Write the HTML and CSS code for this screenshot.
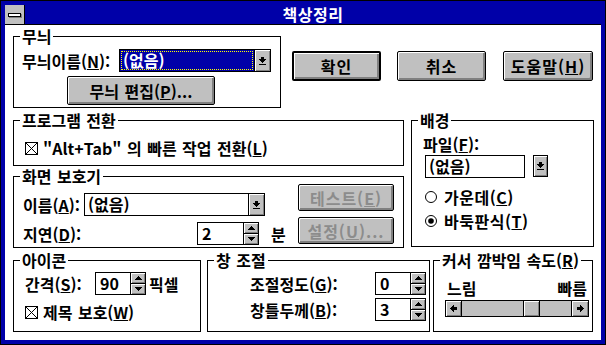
FILE: index.html
```html
<!DOCTYPE html>
<html lang="ko">
<head>
<meta charset="utf-8">
<title>책상정리</title>
<link rel="stylesheet" href="styles.css">
</head>
<body>
<div class="window">
  <div class="titlebar">
    <div class="sysmenu"><span class="sysbar"></span></div>
    <div class="title">책상정리</div>
  </div>
  <div class="client">
    <div class="row row-top">
      <div class="group g-pattern">
        <span class="legend">무늬</span>
        <div class="line">
          <span class="lbl lbl-pattern">무늬이름(<u>N</u>):</span>
          <div class="combo combo-pattern">
            <div class="combo-value selected">(없음)</div>
            <div class="drop"><svg width="7" height="8" shape-rendering="crispEdges"><rect x="2" y="0" width="3" height="2"/><path d="M0 2h7v1h-1v1h-1v1h-1v1h-1v-1h-1v-1h-1v-1h-1z"/><rect x="0" y="7" width="7" height="1"/></svg></div>
          </div>
        </div>
        <div class="btn btn-edit">무늬 편집(<u>P</u>)...</div>
      </div>
      <div class="actions">
        <div class="btn btn-action btn-default">확인</div>
        <div class="btn btn-action">취소</div>
        <div class="btn btn-action btn-help">도움말(<u>H</u>)</div>
      </div>
    </div>

    <div class="row row-mid">
      <div class="col-left">
        <div class="group g-switch">
          <span class="legend">프로그램 전환</span>
          <div class="check-line">
            <svg class="checkbox" width="13" height="13"><rect x="0.5" y="0.5" width="12" height="12" fill="#fff" stroke="#000"/><path d="M1 1L12 12M12 1L1 12" stroke="#000"/></svg>
            <span>"Alt+Tab" 의 빠른 작업 전환(<u>L</u>)</span>
          </div>
        </div>
        <div class="group g-saver">
          <span class="legend">화면 보호기</span>
          <div class="saver-fields">
            <div class="line">
              <span class="lbl lbl-name">이름(<u>A</u>):</span>
              <div class="combo combo-saver">
                <div class="combo-value">(없음)</div>
                <div class="drop"><svg width="7" height="8" shape-rendering="crispEdges"><rect x="2" y="0" width="3" height="2"/><path d="M0 2h7v1h-1v1h-1v1h-1v1h-1v-1h-1v-1h-1v-1h-1z"/><rect x="0" y="7" width="7" height="1"/></svg></div>
              </div>
            </div>
            <div class="line line-delay">
              <span class="lbl lbl-delay">지연(<u>D</u>):</span>
              <div class="spin spin-delay">
                <div class="spin-value">2</div>
                <div class="spin-btns">
                  <div class="half"><svg width="7" height="4" shape-rendering="crispEdges"><path d="M3 0h1v1h1v1h1v1h1v1h-7v-1h1v-1h1v-1h1z"/></svg></div>
                  <div class="half"><svg width="7" height="4" shape-rendering="crispEdges"><path d="M0 0h7v1h-1v1h-1v1h-1v1h-1v-1h-1v-1h-1v-1h-1z"/></svg></div>
                </div>
              </div>
              <span class="unit-min">분</span>
            </div>
          </div>
          <div class="saver-buttons">
            <div class="btn btn-saver disabled">테스트(<u>E</u>)</div>
            <div class="btn btn-saver disabled">설정(<u>U</u>)...</div>
          </div>
        </div>
      </div>

      <div class="group g-bg">
        <span class="legend">배경</span>
        <div class="file-label">파일(<u>F</u>):</div>
        <div class="file-line">
          <div class="edit-file">(없음)</div>
          <div class="drop drop-file"><svg width="7" height="8" shape-rendering="crispEdges"><rect x="2" y="0" width="3" height="2"/><path d="M0 2h7v1h-1v1h-1v1h-1v1h-1v-1h-1v-1h-1v-1h-1z"/><rect x="0" y="7" width="7" height="1"/></svg></div>
        </div>
        <div class="radios">
          <div class="radio-line">
            <svg width="12" height="12"><circle cx="6" cy="6" r="5.5" fill="#fff" stroke="#000"/></svg>
            <span>가운데(<u>C</u>)</span>
          </div>
          <div class="radio-line">
            <svg width="12" height="12"><circle cx="6" cy="6" r="5.5" fill="#fff" stroke="#000"/><circle cx="6" cy="6" r="2.8" fill="#000"/></svg>
            <span>바둑판식(<u>T</u>)</span>
          </div>
        </div>
      </div>
    </div>

    <div class="row row-bottom">
      <div class="group g-icon">
        <span class="legend">아이콘</span>
        <div class="line">
          <span class="lbl lbl-gap">간격(<u>S</u>):</span>
          <div class="spin spin-small">
            <div class="spin-value">90</div>
            <div class="spin-btns">
              <div class="half"><svg width="7" height="4" shape-rendering="crispEdges"><path d="M3 0h1v1h1v1h1v1h1v1h-7v-1h1v-1h1v-1h1z"/></svg></div>
              <div class="half"><svg width="7" height="4" shape-rendering="crispEdges"><path d="M0 0h7v1h-1v1h-1v1h-1v1h-1v-1h-1v-1h-1v-1h-1z"/></svg></div>
            </div>
          </div>
          <span class="unit-px">픽셀</span>
        </div>
        <div class="check-line check-title">
          <svg class="checkbox" width="13" height="13"><rect x="0.5" y="0.5" width="12" height="12" fill="#fff" stroke="#000"/><path d="M1 1L12 12M12 1L1 12" stroke="#000"/></svg>
          <span>제목 보호(<u>W</u>)</span>
        </div>
      </div>

      <div class="group g-arrange">
        <span class="legend">창 조절</span>
        <div class="line arr-line">
          <span class="lbl lbl-arr">조절정도(<u>G</u>):</span>
          <div class="spin spin-small">
            <div class="spin-value">0</div>
            <div class="spin-btns">
              <div class="half"><svg width="7" height="4" shape-rendering="crispEdges"><path d="M3 0h1v1h1v1h1v1h1v1h-7v-1h1v-1h1v-1h1z"/></svg></div>
              <div class="half"><svg width="7" height="4" shape-rendering="crispEdges"><path d="M0 0h7v1h-1v1h-1v1h-1v1h-1v-1h-1v-1h-1v-1h-1z"/></svg></div>
            </div>
          </div>
        </div>
        <div class="line arr-line">
          <span class="lbl lbl-arr">창틀두께(<u>B</u>):</span>
          <div class="spin spin-small">
            <div class="spin-value">3</div>
            <div class="spin-btns">
              <div class="half"><svg width="7" height="4" shape-rendering="crispEdges"><path d="M3 0h1v1h1v1h1v1h1v1h-7v-1h1v-1h1v-1h1z"/></svg></div>
              <div class="half"><svg width="7" height="4" shape-rendering="crispEdges"><path d="M0 0h7v1h-1v1h-1v1h-1v1h-1v-1h-1v-1h-1v-1h-1z"/></svg></div>
            </div>
          </div>
        </div>
      </div>

      <div class="group g-cursor">
        <span class="legend">커서 깜박임 속도(<u>R</u>)</span>
        <div class="speed-labels"><span>느림</span><span>빠름</span></div>
        <div class="scrollbar">
          <div class="sb-btn sb-left"><svg width="7" height="7" shape-rendering="crispEdges"><path d="M0 3h1v-1h1v-1h1v-1h1v7h-1v-1h-1v-1h-1v-1h-1z"/><rect x="4" y="2" width="3" height="3"/></svg></div>
          <div class="sb-track"><div class="sb-thumb"></div></div>
          <div class="sb-btn sb-right"><svg width="7" height="7" shape-rendering="crispEdges"><g transform="translate(7,0) scale(-1,1)"><path d="M0 3h1v-1h1v-1h1v-1h1v7h-1v-1h-1v-1h-1v-1h-1z"/><rect x="4" y="2" width="3" height="3"/></g></svg></div>
        </div>
      </div>
    </div>
  </div>
</div>
</body>
</html>
```

FILE: styles.css
```css
* { box-sizing: border-box; }
html, body { margin: 0; padding: 0; }
body {
  width: 606px;
  height: 345px;
  overflow: hidden;
  font-family: "Noto Sans CJK KR", "Liberation Sans", sans-serif;
  font-size: 16px;
  line-height: 18px;
  font-weight: bold;
  color: #000;
  word-spacing: 1px;
}
u { text-decoration: underline; text-underline-offset: 1px; }
svg { display: block; flex: none; }

.window {
  width: 606px;
  height: 345px;
  border: 1px solid #000;
  padding: 4px;
  background: #0000a8;
  display: flex;
  flex-direction: column;
}
.titlebar {
  flex: none;
  height: 20px;
  display: flex;
  border-bottom: 1px solid #000;
  background: #0000a8;
}
.sysmenu {
  flex: none;
  width: 20px;
  height: 19px;
  background: #c0c0c0;
  border-right: 1px solid #000;
  display: flex;
  align-items: center;
  justify-content: center;
}
.sysbar {
  width: 13px;
  height: 4px;
  border: 1px solid #000;
  background: #fff;
  box-shadow: 1px 1px 0 #808080;
}
.title {
  flex: 1;
  text-align: center;
  color: #fff;
  font-size: 16px;
  line-height: 19px;
  letter-spacing: 0.5px;
}
.client {
  flex: 1;
  background: #fff;
  padding-left: 8px;
}
.row { display: flex; align-items: flex-start; }
.row-top { margin-top: 11px; }
.row-mid { margin-top: 12px; }
.row-bottom { margin-top: 12px; }

.group {
  position: relative;
  flex: none;
  border: 1px solid #000;
}
.legend {
  position: absolute;
  left: 6px;
  top: -9px;
  padding: 0 2px;
  background: #fff;
  line-height: 16px;
  white-space: nowrap;
}
.line { display: flex; align-items: center; }
.lbl { flex: none; white-space: nowrap; }

/* combo boxes */
.combo {
  flex: none;
  display: flex;
  height: 23px;
  border: 1px solid #000;
  background: #fff;
}
.combo-value {
  flex: 1;
  line-height: 21px;
  padding-left: 3px;
  white-space: nowrap;
}
.combo-value.selected {
  background: #0000a8;
  color: #fff;
  outline: 1px dotted #ffff00;
  outline-offset: -2px;
}
.drop {
  flex: none;
  width: 16px;
  border-left: 1px solid #000;
  background: #c0c0c0;
  display: flex;
  align-items: center;
  justify-content: center;
  box-shadow: inset 1px 1px 0 #fff, inset -1px -1px 0 #808080;
}

/* buttons */
.btn {
  flex: none;
  display: flex;
  align-items: center;
  justify-content: center;
  background: #c0c0c0;
  border: 1px solid #000;
  border-radius: 2px;
  white-space: nowrap;
  box-shadow: inset 1px 1px 0 #fff, inset -2px -2px 0 #808080;
}
.btn-default { border-width: 2px; }
.btn-action { letter-spacing: 1px; }
.disabled { color: #8c8c8c; }

/* 무늬 */
.g-pattern { width: 268px; height: 72px; padding: 12px 0 0 8px; }
.lbl-pattern { width: 97px; }
.combo-pattern { width: 152px; }
.btn-edit { width: 148px; height: 29px; margin: 4px 0 0 45px; }

.actions { display: flex; gap: 16px; margin: 15px 0 0 11px; }
.btn-action { width: 89px; height: 30px; }
.btn-help { width: 90px; margin-left: 1px; }

/* left column */
.col-left { flex: none; width: 391px; display: flex; flex-direction: column; }
.g-switch { height: 46px; padding: 17px 0 0 11px; }
.check-line { display: flex; align-items: center; gap: 5px; height: 20px; white-space: nowrap; }

.g-saver { height: 72px; margin-top: 10px; display: flex; }
.saver-fields { flex: none; width: 275px; padding: 16px 0 0 9px; }
.lbl-name { width: 61px; }
.combo-saver { width: 181px; }
.line-delay { margin-top: 6px; }
.lbl-delay { width: 174px; }
.unit-min { margin-left: 12px; }
.saver-buttons { display: flex; flex-direction: column; gap: 6px; padding-top: 7px; margin-left: 9px; }
.btn-saver { width: 96px; height: 27px; letter-spacing: 1px; }

/* spin boxes */
.spin { flex: none; display: flex; height: 23px; }
.spin-value {
  border: 1px solid #000;
  background: #fff;
  padding-left: 4px;
  line-height: 21px;
}
.spin-delay .spin-value { width: 47px; }
.spin-small .spin-value { width: 36px; }
.spin-btns {
  width: 16px;
  margin-left: -1px;
  border: 1px solid #000;
  background: #c0c0c0;
  display: flex;
  flex-direction: column;
}
.half {
  flex: 1;
  display: flex;
  align-items: center;
  justify-content: center;
  box-shadow: inset 1px 1px 0 #fff, inset -1px -1px 0 #808080;
}
.half + .half { border-top: 1px solid #000; }

/* 배경 */
.g-bg { width: 183px; height: 127px; margin-left: 7px; padding: 14px 0 0 11px; }
.file-label { line-height: 18px; }
.file-line { display: flex; align-items: flex-start; gap: 8px; margin: 2px 0 0 2px; }
.edit-file {
  width: 100px;
  height: 23px;
  border: 1px solid #000;
  line-height: 21px;
  padding-left: 3px;
}
.drop-file { width: 15px; height: 22px; border: 1px solid #000; }
.radios { margin: 7px 0 0 2px; }
.radio-line { display: flex; align-items: center; gap: 7px; height: 24px; letter-spacing: 0.5px; }

/* 아이콘 */
.g-icon { width: 188px; height: 72px; padding: 11px 0 0 11px; }
.lbl-gap { width: 70px; }
.unit-px { margin-left: 3px; }
.check-title { margin-top: 7px; }

/* 창 조절 */
.g-arrange { width: 223px; height: 72px; margin-left: 6px; padding: 11px 0 0 42px; }
.arr-line + .arr-line { margin-top: 3px; }
.lbl-arr { width: 125px; }

/* 커서 */
.g-cursor { width: 160px; height: 72px; margin-left: 3px; padding: 17px 0 0 11px; }
.speed-labels {
  width: 144px;
  display: flex;
  justify-content: space-between;
  padding: 0 2px;
  line-height: 20px;
}
.scrollbar {
  width: 144px;
  height: 17px;
  margin-top: 2px;
  border: 1px solid #000;
  background: #c0c0c0;
  display: flex;
}
.sb-btn {
  flex: none;
  display: flex;
  align-items: center;
  justify-content: center;
  box-shadow: inset 1px 1px 0 #fff, inset -1px -1px 0 #808080;
}
.sb-left { width: 16px; border-right: 1px solid #000; }
.sb-right { width: 17px; border-left: 1px solid #000; }
.sb-track { flex: 1; padding-left: 61px; }
.sb-thumb {
  width: 17px;
  height: 100%;
  border-left: 1px solid #000;
  border-right: 1px solid #000;
  box-shadow: inset 1px 1px 0 #fff, inset -1px -1px 0 #808080;
}
```
